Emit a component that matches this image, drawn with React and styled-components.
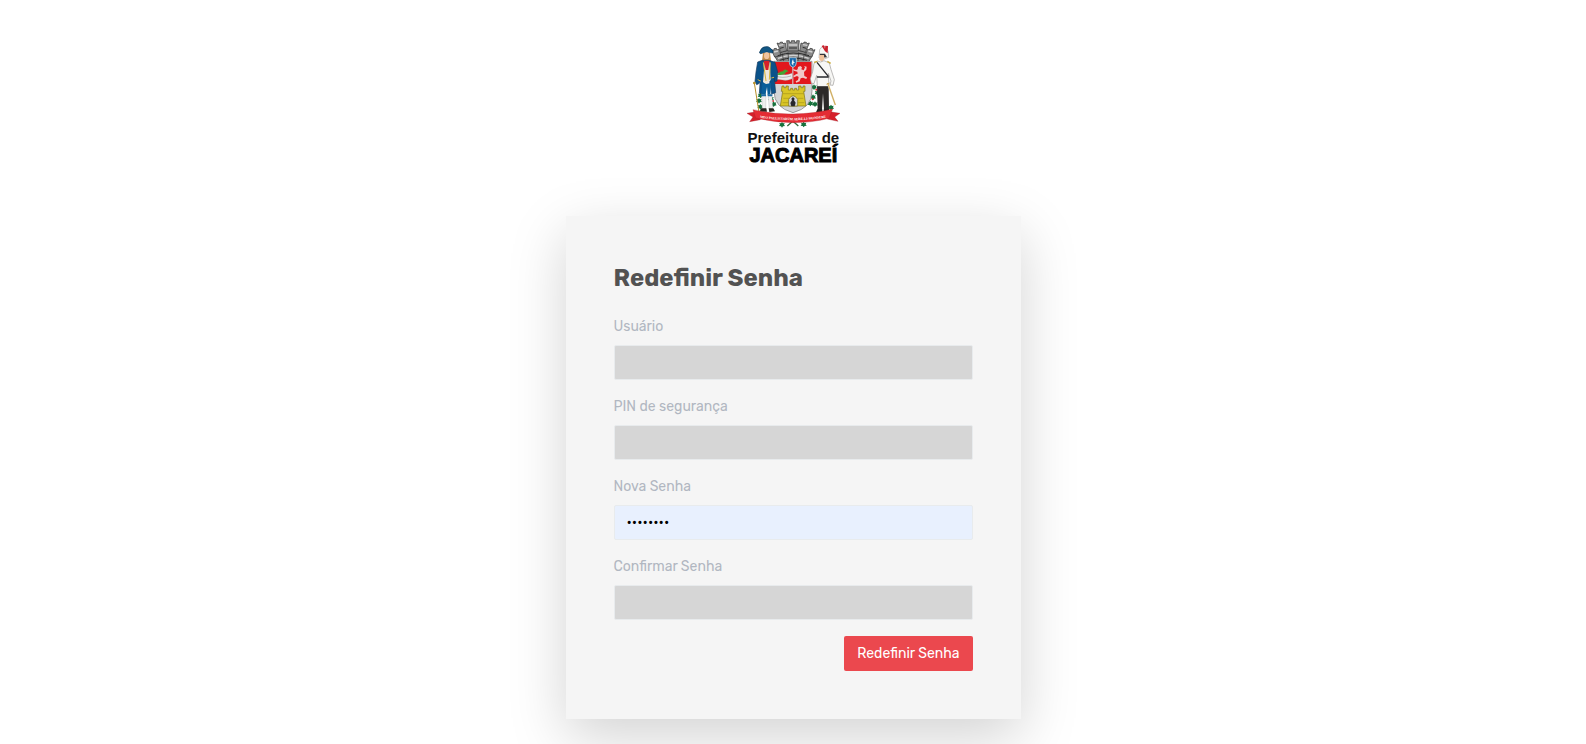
import React from "react";
import styled, { createGlobalStyle } from "styled-components";

const GlobalStyle = createGlobalStyle`
  *, *::before, *::after { box-sizing: border-box; }
  body {
    margin: 0;
    background: #fff;
    font-family: Rubik, Roboto, "Liberation Sans", sans-serif;
    font-size: 14px;
    line-height: 21px;
  }
`;

const Page = styled.main`
  display: flex;
  flex-direction: column;
  align-items: center;
  gap: 46px;
  padding: 35px 16px 25px;
`;

const Logo = styled.svg`
  display: block;
  width: 105px;
  height: 135px;
`;

const Card = styled.form`
  width: 100%;
  max-width: 455px;
  padding: 48px;
  background: #f5f5f5;
  box-shadow: 0 18px 54px rgba(0, 0, 0, 0.175);
`;

const Title = styled.h1`
  margin: 0 0 23px;
  color: #525252;
  font-size: 24px;
  font-weight: 700;
  line-height: 29px;
`;

const Field = styled.div`
  display: flex;
  flex-direction: column;
  gap: 8px;
  margin-bottom: 16px;
`;

const Label = styled.label`
  color: #b1b7c1;
`;

const Input = styled.input`
  width: 100%;
  height: 35px;
  padding: 6px 12px;
  border: 1px solid #e8ebed;
  border-radius: 2px;
  outline: 0;
  background: ${(p) => (p.$filled ? "#e8f0fe" : "#d6d6d6")};
  color: #000;
  font: inherit;
`;

const Actions = styled.div`
  display: flex;
  justify-content: flex-end;
`;

const Button = styled.button`
  height: 35px;
  padding: 0 13px;
  border: 0;
  border-radius: 2px;
  background: #eb484e;
  color: #fff;
  font: inherit;
  cursor: pointer;
`;

const LEAVES = [
  [221, 155], [232, 172], [218, 185], [210, 204], [224, 206], [92, 190], [100, 206],
  [61, 180], [56, 196], [60, 214], [272, 216], [125, 268], [190, 267],
];

const CROWN_TOWERS = [
  "M93 44l7 2 1-5 7-1 2 5 6-3 6 20-19 4z",
  "M110 24l7 2 2-4 7-1 2 5 7-2 4 23-17 5z",
  "M139 17h8v5h6v-5h10v5h6v-5h8l-3 31h-32z",
  "M207 24l-7 2-2-4-7-1-2 5-7-2-4 23 17 5z",
  "M224 44l-7 2-1-5-7-1-2 5-6-3-6 20 19 4z",
];

function CityLogo() {
  return (
    <Logo viewBox="2 0 315 405" role="img" aria-label="Prefeitura de Jacareí">
      {/* mural crown */}
      <g stroke="#2d2d2d" strokeWidth="2" strokeLinejoin="round">
        <path d="M102 62q20-16 57-16t57 16l-13 22h-88z" fill="#858585" />
        {CROWN_TOWERS.map((d) => (
          <path key={d} d={d} fill="#8b8b8b" />
        ))}
        <path d="M116 31l13-2M145 30h26M188 29l13 2M101 51l12-3M204 48l12 3M113 70q46-18 92 0" fill="none" stroke="#d2d2d2" strokeWidth="4" />
        <path d="M119 40l11-3M146 39h24M187 37l11 3M112 62q46-16 94 0M118 76q40-14 82 0" fill="none" strokeWidth="3" />
        <path d="M126 56l4 24M143 52l2 26M175 52l-2 26M192 56l-4 24" fill="none" />
      </g>
      {/* foliage behind the supporters */}
      <g fill="#16713c">
        {LEAVES.map(([x, y]) => (
          <path key={`${x}-${y}`} d={`M${x} ${y - 7}l3 4 5-1-2 5 3 4-6 1-3 4-3-4-6-1 3-4-2-5 5 1z`} />
        ))}
      </g>
      <g fill="#d7222b">
        <circle cx="217" cy="193" r="3" />
        <circle cx="98" cy="198" r="3" />
        <circle cx="228" cy="164" r="3" />
      </g>
      {/* shield */}
      <path d="M101 79h114v90q0 49-57 64-57-15-57-64z" fill="#d3d5d7" stroke="#777" strokeWidth="2" />
      <path d="M103 81h53v66h-53zM159 81h54v66h-54z" fill="#e2171d" />
      <path d="M103 116q11-4 19 1 17 5 34-3v17q-17 8-30 4-11-3-23 0z" fill="#ececec" stroke="#8c7777" strokeWidth="1" />
      <path d="M106 123q20 8 46 0" fill="none" stroke="#999" strokeWidth="2" />
      <path d="M111 119q5-9 17-10 2-6 9-5l8 5-7 2q-8 12-27 8z" fill="#42a532" />
      <path d="M147 68h21v15q0 11-10 14-11-3-11-14z" fill="#1667ab" stroke="#dbe9f1" strokeWidth="2" />
      <path d="M158 72l2 8 4 3-5 2v7l-5-6 1-7z" fill="#e5f1f7" />
      <path d="M173 96l7-3 5 4-2 6 7 3 4-9-3-4 8 2-1 9-7 7 1 12 8 4-2 5-10-4-7 2-3 9-10 4-2-4 7-4 2-9-5-3-9 4-2-4 9-6 4-1-1-6-11-3-2-5 10 3 4-2z" fill="#f1c8c8" />
      {/* castle */}
      <path d="M125 153h6v5h6v-5h7v12h7v-5h6v5h6v-5h6v5h6v-12h7v5h6v-5h6v16h-4l7 44h-77l7-44h-4z" fill="#d9c526" stroke="#7c7116" strokeWidth="2" />
      <path d="M128 176h62M129 190h17m26 0h17M127 203h18m29 0h18" stroke="#a8961b" strokeWidth="2" />
      <path d="M145 213v-20q13-22 27 0v20z" fill="#d3d5d7" stroke="#746914" strokeWidth="2" />
      <path d="M158 186l5 5-2 5 5 7-3 11h-10l-3-10 5-8-2-5z" fill="#27282c" />
      {/* left supporter */}
      <path d="M59 49q5-12 12-13 14-5 22 6 8 6 4 12-18-6-36 2-6-2-2-7z" fill="#125785" stroke="#0b3454" strokeWidth="2" />
      <path d="M68 54h21l3 24H65z" fill="#c78e48" />
      <ellipse cx="79" cy="62" rx="8" ry="10" fill="#f1c5a0" />
      <path d="M66 76l-14 5-5 30-3 28 5 10 8-4 3-13-3 43 17 2 10-60 10 60 12-4-4-43 1 10 7-2 2-27-8-29-18-6z" fill="#0a528a" stroke="#183d60" strokeWidth="2" />
      <path d="M73 82h15l3 53-13 15-10-9z" fill="#eee7dc" />
      <path d="M70 77h18l-4 28h-8z" fill="#d91f28" />
      <path d="M69 82l8 56M90 82l-3 52M52 134l9 4M93 129l8-2" fill="none" stroke="#d7b53d" strokeWidth="3" />
      <path d="M66 144l13 3 13-4-2 35-8 2-2-25-5 25-12-2z" fill="#0a5f9a" />
      <path d="M64 178l13 2-1 43H66zM83 180l12-2 2 42-10 3z" fill="#eee" stroke="#a9aaa9" strokeWidth="1" />
      <path d="M62 178h15v6H62zM82 178h14v6H82z" fill="#1d6ca3" />
      <path d="M62 220h16l2 10H58zM85 220h14l5 9-17 2z" fill="#28251f" />
      <path d="M42 144l14 88" stroke="#b88f2a" strokeWidth="3" />
      <circle cx="42" cy="144" r="4" fill="#b88f2a" />
      {/* right supporter */}
      <path d="M238 44q6-13 17-10l9 16 1 17-13 5-16-3z" fill="#f8f8f5" stroke="#aaa" strokeWidth="2" />
      <path d="M244 33q6-4 8-1l2 9 1-9 8 1-1 22-8-6z" fill="#c91f2b" />
      <path d="M238 56h16l6 11-20 2z" fill="#34353b" />
      <path d="M237 60h14l1 13-7 7-8-5z" fill="#efc29b" />
      <path d="M232 78l-11 7-4 25-7 21 3 13 8 2 8-25 2 34h35l-2-40 8 23-3 12 9 1 4-17-10-31-5-19-16-7-10 4z" fill="#f7f7f5" stroke="#9b9a98" strokeWidth="2" />
      <path d="M230 82l34 42M230 126h35" fill="none" stroke="#292a2d" strokeWidth="4" />
      <path d="M221 82l10-3M261 79l10 6" stroke="#caaa3a" strokeWidth="4" />
      <path d="M230 154h35l1 71h-15l-3-50-3 50h-13z" fill="#2b2929" />
      <path d="M231 223h15v9h-19zM250 223h16l6 8-22 2z" fill="#222" />
      <path d="M262 144l23 66" stroke="#ead7aa" strokeWidth="5" />
      <path d="M262 144l23 66m-27-62l10-4" fill="none" stroke="#bd9336" strokeWidth="2" />
      {/* motto ribbon */}
      <path d="M141 273l16-14m17 14l-16-14" fill="none" stroke="#356b3e" strokeWidth="4" />
      <path d="M20 235l37-6 3 25-32 6 10-14z" fill="#d61f29" stroke="#971820" strokeWidth="1" />
      <path d="M299 235l-40-6 2 23 32 7-10-13z" fill="#d61f29" stroke="#971820" strokeWidth="1" />
      <path d="M38 224q62 15 120 13 65-1 119-15l-11 28q-51 13-108 13-60-1-112-14z" fill="#e42c34" stroke="#a81d26" strokeWidth="1" />
      <path id="motto-line" d="M52 247q106 17 212 0" fill="none" />
      <text fill="#fff" fontFamily="Liberation Serif, serif" fontSize="10" fontWeight="700">
        <textPath href="#motto-line" startOffset="50%" textAnchor="middle">MEO PAULISTARUM AERE-LI-MONDERE</textPath>
      </text>
      <text x="159" y="323" textAnchor="middle" fill="#111" fontFamily="Liberation Sans, Arial, sans-serif" fontSize="45" fontWeight="700">
        Prefeitura de
      </text>
      <text x="159" y="380" textAnchor="middle" fill="#000" stroke="#000" strokeWidth="3" fontFamily="Liberation Sans, Arial, sans-serif" fontSize="60" fontWeight="700">
        JACAREÍ
      </text>
    </Logo>
  );
}

const FIELDS = [
  { id: "usuario", label: "Usuário", type: "text" },
  { id: "pin", label: "PIN de segurança", type: "text" },
  { id: "nova-senha", label: "Nova Senha", type: "password", value: "senha123" },
  { id: "confirmar-senha", label: "Confirmar Senha", type: "password" },
];

export default function App() {
  return (
    <>
      <GlobalStyle />
      <Page>
        <CityLogo />
        <Card onSubmit={(event) => event.preventDefault()}>
          <Title>Redefinir Senha</Title>
          {FIELDS.map(({ id, label, type, value }) => (
            <Field key={id}>
              <Label htmlFor={id}>{label}</Label>
              <Input id={id} name={id} type={type} defaultValue={value} $filled={Boolean(value)} />
            </Field>
          ))}
          <Actions>
            <Button type="submit">Redefinir Senha</Button>
          </Actions>
        </Card>
      </Page>
    </>
  );
}
